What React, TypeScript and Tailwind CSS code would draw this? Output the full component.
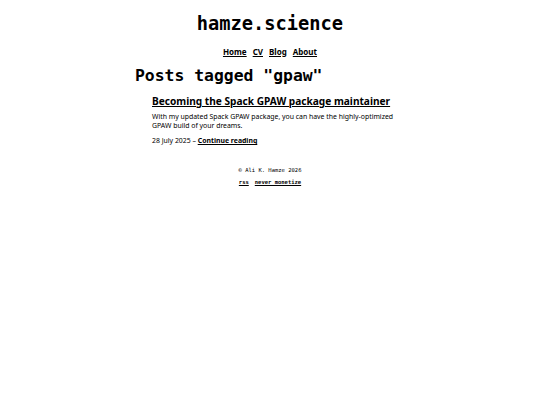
const mono = "font-['DejaVu_Sans_Mono',monospace]";
const sans = "font-['Noto_Sans',sans-serif]";

const links = ["Home", "CV", "Blog", "About"];

export default function App() {
  return (
    <div className={`min-h-screen bg-white text-black ${sans}`}>
      <header className="pt-[13px] text-center">
        <h1 className={`${mono} text-[18.7px] font-bold leading-[22px]`}>hamze.science</h1>
        <nav className="mt-[12px] flex justify-center gap-[6px] text-[8px] font-bold leading-[10px]">
          {links.map((l) => (
            <a key={l} href="#" className="underline">
              {l}
            </a>
          ))}
        </nav>
      </header>

      <main className="mx-auto w-[270px]">
        <h2 className={`${mono} mt-[9px] text-[16.4px] font-bold leading-[20px]`}>
          Posts tagged "gpaw"
        </h2>

        <article className="ml-[17px]">
          <h3 className="mt-[8px] text-[10.15px] font-bold leading-[14px]">
            <a href="#" className="underline">
              Becoming the Spack GPAW package maintainer
            </a>
          </h3>
          <p className="mt-[5px] text-[6.9px] leading-[8.7px]">
            With my updated Spack GPAW package, you can have the highly-optimized GPAW build of your
            dreams.
          </p>
          <p className="mt-[7px] text-[6.9px] leading-[8.7px]">
            28 July 2025 –{" "}
            <a href="#" className="font-bold underline">
              Continue reading
            </a>
          </p>
        </article>
      </main>

      <footer className={`${mono} mt-[20px] text-center text-[5.5px] leading-[8px]`}>
        <p>© Ali K. Hamze 2026</p>
        <p className="mt-[4px] flex justify-center gap-[6px] font-bold">
          <a href="#" className="underline">rss</a>
          <a href="#" className="underline">never monetize</a>
        </p>
      </footer>
    </div>
  );
}
